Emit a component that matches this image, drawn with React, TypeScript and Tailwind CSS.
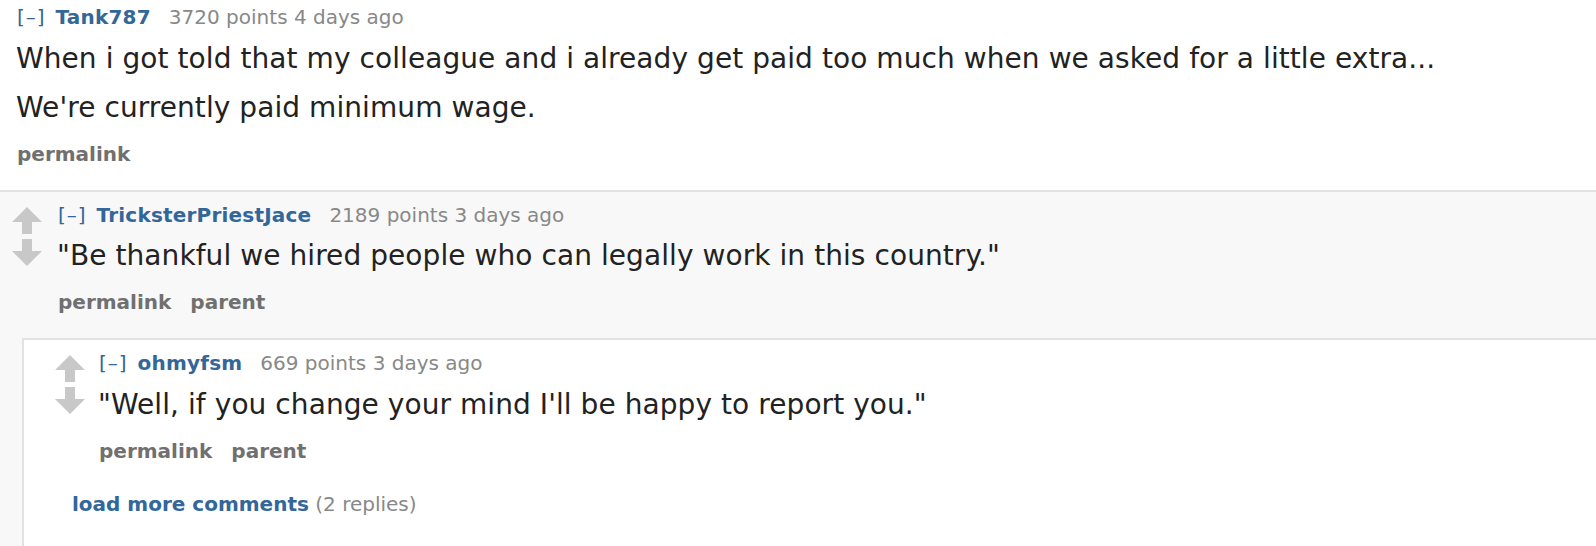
import React from "react";

const Arrow = ({ down = false }: { down?: boolean }) => (
  <svg width="30" height="27" viewBox="0 0 30 27" className={down ? "rotate-180 blur-[0.4px]" : "blur-[0.4px]"}>
    <path d="M15 0 L30 15 L20 15 L20 27 L10 27 L10 15 L0 15 Z" fill="#c8c8c8" />
  </svg>
);

const Tagline = ({ author, points, time }: { author: string; points: string; time: string }) => (
  <div className="flex items-center h-[24px] leading-[24px] text-[20px] whitespace-nowrap">
    <span className="text-[#336699] tracking-[1px]">[–]</span>
    <span className="ml-[10px] font-bold text-[#336699] tracking-[0.2px]">{author}</span>
    <span className="ml-[18px] text-[#888888]">{points} points {time}</span>
  </div>
);

const Buttons = ({ items }: { items: string[] }) => (
  <div className="flex gap-[19px] h-[24px] leading-[24px] text-[20px] font-bold text-[#707070] whitespace-nowrap">
    {items.map((i) => (
      <span key={i}>{i}</span>
    ))}
  </div>
);

export default function App() {
  return (
    <div
      className="w-[1596px] h-[546px] overflow-hidden bg-white text-[#222222]"
      style={{ fontFamily: "Verdana, 'DejaVu Sans', sans-serif" }}
    >
      {/* top comment */}
      <div className="pl-[17px] pt-[5px] h-[190px]">
        <Tagline author="Tank787" points="3720" time="4 days ago" />
        <div className="mt-[10px] -ml-[1px] text-[28px] leading-[40px] whitespace-nowrap tracking-[0.07px]">
          <p>When i got told that my colleague and i already get paid too much when we asked for a little extra...</p>
          <p className="mt-[9px]">We're currently paid minimum wage.</p>
        </div>
        <div className="mt-[14px]">
          <Buttons items={["permalink"]} />
        </div>
      </div>

      {/* second comment */}
      <div className="border-t-2 border-[#e2e2e2] bg-[#f8f8f8]">
        <div className="flex h-[146px]">
          <div className="w-[58px] shrink-0 pl-[12px] pt-[15px] flex flex-col gap-[5px]">
            <Arrow />
            <Arrow down />
          </div>
          <div className="pt-[11px]">
            <Tagline author="TricksterPriestJace" points="2189" time="3 days ago" />
            <div className="mt-[9px] -ml-[1px] text-[28px] leading-[40px] whitespace-nowrap tracking-[0.07px]">
              <p>"Be thankful we hired people who can legally work in this country."</p>
            </div>
            <div className="mt-[14px]">
              <Buttons items={["permalink", "parent"]} />
            </div>
          </div>
        </div>

        {/* nested */}
        <div className="ml-[22px] border-t-2 border-l-2 border-[#e2e2e2] bg-white h-[220px]">
          <div className="flex">
            <div className="w-[75px] shrink-0 pl-[31px] pt-[15px] flex flex-col gap-[5px]">
              <Arrow />
              <Arrow down />
            </div>
            <div className="pt-[11px]">
              <Tagline author="ohmyfsm" points="669" time="3 days ago" />
              <div className="mt-[10px] -ml-[1px] text-[28px] leading-[40px] whitespace-nowrap tracking-[0.07px]">
                <p>"Well, if you change your mind I'll be happy to report you."</p>
              </div>
              <div className="mt-[14px]">
                <Buttons items={["permalink", "parent"]} />
              </div>
            </div>
          </div>
          <div className="pl-[48px] mt-[29px] h-[24px] leading-[24px] text-[20px] whitespace-nowrap">
            <span className="font-bold text-[#336699]">load more comments</span>
            <span className="text-[#888888]"> (2 replies)</span>
          </div>
        </div>
      </div>
    </div>
  );
}
